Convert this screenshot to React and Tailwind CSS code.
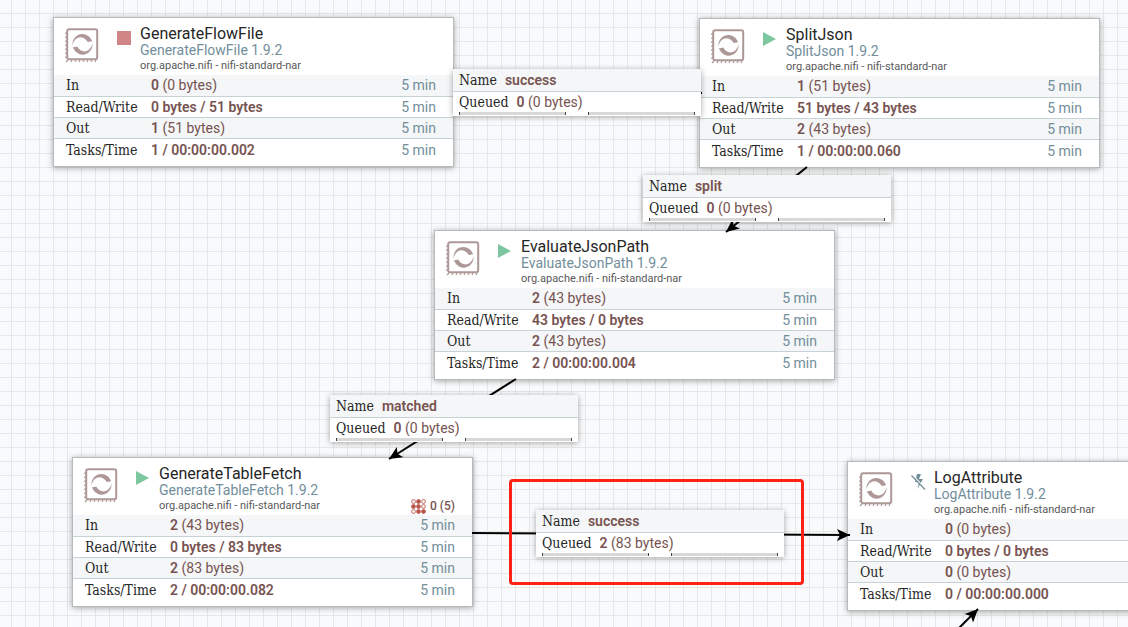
import React from 'react';

const processors = [
    {
        id: 'generate-flow-file', pos: 'left-[53px] top-[17px]', name: 'GenerateFlowFile', status: 'stopped', period: '5 min',
        in: ['0', '(0 bytes)'], readWrite: '0 bytes / 51 bytes', out: ['1', '(51 bytes)'], tasks: '1 / 00:00:00.002',
    },
    {
        id: 'split-json', pos: 'left-[699px] top-[18px]', name: 'SplitJson', status: 'running', period: '5 min',
        in: ['1', '(51 bytes)'], readWrite: '51 bytes / 43 bytes', out: ['2', '(43 bytes)'], tasks: '1 / 00:00:00.060',
    },
    {
        id: 'evaluate-json-path', pos: 'left-[434px] top-[230px]', name: 'EvaluateJsonPath', status: 'running', period: '5 min',
        in: ['2', '(43 bytes)'], readWrite: '43 bytes / 0 bytes', out: ['2', '(43 bytes)'], tasks: '2 / 00:00:00.004',
    },
    {
        id: 'generate-table-fetch', pos: 'left-[72px] top-[457px]', name: 'GenerateTableFetch', status: 'running', period: '5 min', threads: '0 (5)',
        in: ['2', '(43 bytes)'], readWrite: '0 bytes / 83 bytes', out: ['2', '(83 bytes)'], tasks: '2 / 00:00:00.082',
    },
    {
        id: 'log-attribute', pos: 'left-[847px] top-[461px]', name: 'LogAttribute', status: 'disabled',
        in: ['0', '(0 bytes)'], readWrite: '0 bytes / 0 bytes', out: ['0', '(0 bytes)'], tasks: '0 / 00:00:00.000',
    },
];

const connections = [
    { id: 'c1', pos: 'left-[453px] top-[69px]', name: 'success', count: '0', size: '(0 bytes)' },
    { id: 'c2', pos: 'left-[643px] top-[175px]', name: 'split', count: '0', size: '(0 bytes)' },
    { id: 'c3', pos: 'left-[330px] top-[395px]', name: 'matched', count: '0', size: '(0 bytes)' },
    { id: 'c4', pos: 'left-[536px] top-[510px]', name: 'success', count: '2', size: '(83 bytes)' },
];

// [x1, y1, x2, y2], the arrow points at the second end
const paths = [
    [453, 90, 702, 93],
    [807, 167, 726, 232],
    [516, 379, 389, 459],
    [472, 533, 850, 535],
    [956, 631, 978, 609],
];

function ProcessorIcon() {
    const crescent = 'M7.4 18.5C7 7 19 3.5 25 10.6l2.2 3.6-4.4.9C18.5 7.6 9.5 8.6 7.4 18.5z';
    return (
        <svg width="34" height="36" viewBox="0 0 34 36" fill="none" aria-hidden="true">
            <rect x="2.2" y="2.2" width="30" height="30" rx="2" stroke="#ad9897" strokeWidth="2" />
            <path
                d="M1.5 5l-1 2M1.5 9l-1 2M1.5 13l-1 2M1.5 17l-1 2M1.5 21l-1 2M1.5 25l-1 2M1.5 29l-1 2M3 33l-2 2M7 33l-1 2M11 33l-1 2M15 33l-1 2M19 33l-1 2M23 33l-1 2M27 33l-1 2M31 33l-1 2"
                stroke="#ad9897"
                strokeWidth="1.2"
            />
            <path d={crescent} fill="#ad9897" />
            <path d={crescent} fill="#ad9897" transform="rotate(180 17.5 17.3)" />
        </svg>
    );
}

function StatusIcon({ status }) {
    if (status === 'stopped') {
        return (
            <svg width="16" height="16" viewBox="0 0 16 16" aria-hidden="true">
                <rect x="1" y="1" width="14" height="14" fill="#d18686" />
            </svg>
        );
    }
    if (status === 'running') {
        return (
            <svg width="16" height="16" viewBox="0 0 16 16" aria-hidden="true">
                <path d="M1 1l13 7-13 7z" fill="#7dc7a0" />
            </svg>
        );
    }
    return (
        <svg width="16" height="16" viewBox="0 0 16 16" aria-hidden="true">
            <path d="M7 0h4L9 5h4l-5.5 10L9 8H5z" fill="#728e9b" />
            <path d="M2.5 1l13 14" stroke="#fff" strokeWidth="1.4" />
            <path d="M1.5 1.5l13.5 14" stroke="#728e9b" strokeWidth="1.3" />
        </svg>
    );
}

function ThreadsIcon() {
    const dots = [0, 1, 2, 3, 4, 5, 6, 7, 8];
    const hollow = [0, 2, 5, 6];
    return (
        <svg width="15" height="15" viewBox="0 0 15 15" aria-hidden="true">
            {dots.map(i => (
                <circle
                    key={i}
                    cx={2.5 + (i % 3) * 5}
                    cy={2.5 + Math.floor(i / 3) * 5}
                    r="1.9"
                    fill={hollow.includes(i) ? '#fff' : '#ba554a'}
                    stroke="#ba554a"
                    strokeWidth="0.9"
                />
            ))}
        </svg>
    );
}

function StatRow({ label, period, shaded, last, children }) {
    const border = last ? 'h-6' : 'h-[21px] border-b border-[#c7d2d7]';
    return (
        <tr className={`${border} ${shaded ? 'bg-[#f4f6f7]' : 'bg-white'}`}>
            <th scope="row" className="w-[97px] p-0 pl-3 text-left font-['Roboto_Slab','DejaVu_Serif_Condensed','DejaVu_Serif',serif] text-[14px] leading-5 font-normal text-[#262626]">
                {label}
            </th>
            <td className="p-0 text-[14px] leading-5 text-[#775351]">{children}</td>
            {period && <td className="p-0 pr-[17px] text-right text-[14px] leading-5 text-[#728e9b]">{period}</td>}
        </tr>
    );
}

function Processor({ data }) {
    return (
        <section className={`absolute ${data.pos} w-[401px] border border-[#b5bbbd] bg-white pb-1 shadow-[0_1px_6px_rgba(0,0,0,0.35)]`}>
            <header className="flex h-[57px] pt-2 pr-[17px] pl-[11px]">
                <div className="pt-px">
                    <ProcessorIcon />
                </div>
                <div className="ml-[17px] pt-1">
                    <StatusIcon status={data.status} />
                </div>
                <div className="ml-2 flex-1">
                    <h2 className="text-[16px] leading-4 text-[#262626]">{data.name}</h2>
                    <p className="text-[14px] leading-4 text-[#728e9b]">{data.name} 1.9.2</p>
                    <p className="text-[11px] leading-4 text-[#595959]">org.apache.nifi - nifi-standard-nar</p>
                </div>
                {data.threads && (
                    <div className="flex items-end gap-1 pb-px text-[12px] leading-4 font-medium text-[#775351]">
                        <ThreadsIcon />
                        <span>{data.threads}</span>
                    </div>
                )}
            </header>
            <table className="w-full border-collapse">
                <tbody>
                    <StatRow label="In" period={data.period} shaded><b className="font-semibold">{data.in[0]}</b> {data.in[1]}</StatRow>
                    <StatRow label="Read/Write" period={data.period}><b className="font-semibold">{data.readWrite}</b></StatRow>
                    <StatRow label="Out" period={data.period} shaded><b className="font-semibold">{data.out[0]}</b> {data.out[1]}</StatRow>
                    <StatRow label="Tasks/Time" period={data.period} last><b className="font-semibold">{data.tasks}</b></StatRow>
                </tbody>
            </table>
        </section>
    );
}

function Connection({ data }) {
    return (
        <section className={`absolute ${data.pos} w-[248px] bg-white pb-px text-[14px] text-[#775351] shadow-[0_1px_6px_rgba(0,0,0,0.35)]`}>
            <div className="flex h-[23px] items-center gap-2 border-b border-[#c7d2d7] bg-[#f4f6f7] px-[6px]">
                <span className="font-['Roboto_Slab','DejaVu_Serif_Condensed','DejaVu_Serif',serif] text-[14px] text-[#262626]">Name</span>
                <b className="font-semibold">{data.name}</b>
            </div>
            <div className="flex h-5 items-center gap-2 px-[6px]">
                <span className="font-['Roboto_Slab','DejaVu_Serif_Condensed','DejaVu_Serif',serif] text-[14px] text-[#262626]">Queued</span>
                <span><b className="font-semibold">{data.count}</b> {data.size}</span>
            </div>
            <div className="flex justify-between px-[6px]">
                <div className="h-[3px] w-[107px] border-x border-[#444] bg-[#d8d8d8]" />
                <div className="h-[3px] w-[107px] border-x border-[#444] bg-[#d8d8d8]" />
            </div>
        </section>
    );
}

export default function App() {
    return (
        <main className="relative h-screen w-full overflow-hidden bg-[#f9fafb] bg-[linear-gradient(to_right,#e5e7e9_1px,transparent_1px),linear-gradient(to_bottom,#e5e7e9_1px,transparent_1px)] bg-[length:14px_14px] bg-[position:11px_13px] font-[Roboto,sans-serif]">
            {processors.map(p => <Processor key={p.id} data={p} />)}

            <svg className="absolute inset-0 h-full w-full" aria-hidden="true">
                <defs>
                    <marker id="arrow" markerUnits="userSpaceOnUse" markerWidth="14" markerHeight="14" refX="13" refY="7" orient="auto">
                        <path d="M0 1l13 6-13 6 3-6z" />
                    </marker>
                </defs>
                {paths.map(([x1, y1, x2, y2]) => (
                    <line key={x1} x1={x1} y1={y1} x2={x2} y2={y2} stroke="#000" strokeWidth="2" markerEnd="url(#arrow)" />
                ))}
            </svg>

            {connections.map(c => <Connection key={c.id} data={c} />)}

            {/* Highlight around the queued connection */}
            <div className="absolute top-[479px] left-[509px] h-[106px] w-[295px] rounded-sm border-3 border-[#ff2115]" />
        </main>
    );
}
